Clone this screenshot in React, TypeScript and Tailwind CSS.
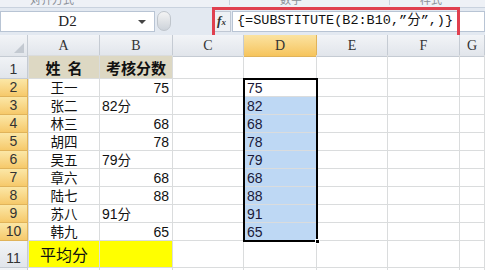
import React from 'react';

const cols = ['A', 'B', 'C', 'D', 'E', 'F', 'G'];

const rows: { name: string; score: string; text?: boolean; d: string }[] = [
  { name: '王一', score: '75', d: '75' },
  { name: '张二', score: '82分', text: true, d: '82' },
  { name: '林三', score: '68', d: '68' },
  { name: '胡四', score: '78', d: '78' },
  { name: '吴五', score: '79分', text: true, d: '79' },
  { name: '章六', score: '68', d: '68' },
  { name: '陆七', score: '88', d: '88' },
  { name: '苏八', score: '91分', text: true, d: '91' },
  { name: '韩九', score: '65', d: '65' },
];

const cjk = { fontFamily: '"Noto Sans CJK SC", "Liberation Sans", sans-serif' };
const num = { fontFamily: '"Liberation Sans", "Noto Sans CJK SC", sans-serif' };

function RowHeader({ n, active, h }: { n: number | string; active?: boolean; h: string }) {
  return (
    <div
      className={`${h} flex items-end justify-center pb-[2px] border-b border-r text-[14px] leading-none ${
        active
          ? 'bg-gradient-to-b from-[#fbe7a6] to-[#f6c96a] border-[#e0b35a] text-[#333]'
          : 'bg-gradient-to-b from-[#f2f4f7] to-[#e1e5eb] border-[#c5cbd3] text-[#333]'
      }`}
      style={num}
    >
      {n}
    </div>
  );
}

function Cell({ className = '', children }: { className?: string; children?: React.ReactNode }) {
  return (
    <div className={`flex items-center border-r border-b border-[#dadcdd] overflow-hidden whitespace-nowrap leading-none ${className}`}>
      {children}
    </div>
  );
}

export default function App() {
  const trackCols = 'grid-cols-[28px_72px_73px_71px_73px_71px_72px_1fr]';

  return (
    <div className="relative w-[485px] h-[270px] overflow-hidden bg-white select-none">
      {/* ribbon remnant */}
      <div className="h-[8px] bg-[#eef1f6] border-b border-[#c9d2de] overflow-hidden">
        <div className="flex text-[11px] text-[#8a8f96] leading-[11px] -mt-[6px]" style={cjk}>
          <span className="w-[230px] pl-[30px] border-r border-[#c9d2de]">对齐方式</span>
          <span className="w-[160px] pl-[50px] border-r border-[#c9d2de]">数字</span>
          <span className="pl-[30px]">样式</span>
        </div>
      </div>

      {/* formula bar */}
      <div className="h-[25px] bg-[#e3e9f1] flex items-center pt-[1px]">
        <div className="w-[155px] h-[21px] bg-white border border-[#b8c4d4] flex items-center relative">
          <span className="flex-1 text-center text-[15px] text-[#222] pr-[20px]" style={{ fontFamily: '"Liberation Serif", serif' }}>
            D2
          </span>
          <span className="absolute right-[8px] top-[8px] w-0 h-0 border-l-[4px] border-r-[4px] border-t-[4px] border-l-transparent border-r-transparent border-t-[#444]" />
        </div>
        <div className="w-[14px] h-[20px] ml-[2px] rounded-full bg-gradient-to-b from-[#f4f4f4] to-[#cdd3da] border border-[#bfc5cc]" />
        <div className="flex-1" />
        <div className="w-[19px] h-[21px] flex items-center justify-center text-[13px] italic font-bold text-[#333] border border-[#c0c8d4] bg-[#eef1f5]" style={{ fontFamily: '"Liberation Serif", serif' }}>
          f<span className="text-[9px] -mb-[3px]">x</span>
        </div>
        <div className="w-[253px] h-[21px] bg-white border border-[#b8c4d4] ml-[1px] flex items-center pl-[4px] text-[13.5px] text-[#111]" style={{ fontFamily: '"Liberation Mono", "Noto Sans CJK SC", monospace' }}>
          {'{=SUBSTITUTE(B2:B10,\u201d分\u201d,)}'}
        </div>
      </div>

      {/* red highlight around formula */}
      <div className="absolute left-[212px] top-[7px] w-[248px] h-[38px] border-[3px] border-[#e0404f] pointer-events-none" />

      <div className="h-[2px] bg-[#e3e9f1]" />

      {/* sheet */}
      <div className="relative">
        <div className={`grid ${trackCols} h-[20px]`}>
          <div className="border-r border-b border-[#c5cbd3] bg-gradient-to-b from-[#f2f4f7] to-[#e1e5eb] relative">
            <svg className="absolute right-[3px] bottom-[3px]" width="10" height="10" viewBox="0 0 10 10">
              <path d="M10 0 L10 10 L0 10 Z" fill="#c3c9d1" />
            </svg>
          </div>
          {cols.map((c) => (
            <div
              key={c}
              className={`flex items-center justify-center border-r border-b text-[14px] ${
                c === 'D'
                  ? 'bg-gradient-to-b from-[#fbe3a0] to-[#f6c45c] border-[#e0b35a]'
                  : 'bg-gradient-to-b from-[#f2f4f7] to-[#e1e5eb] border-[#c5cbd3]'
              } text-[#333]`}
              style={{ fontFamily: '"Liberation Serif", serif' }}
            >
              {c}
            </div>
          ))}
        </div>

        {/* row 1 */}
        <div className={`grid ${trackCols} h-[24px]`}>
          <RowHeader n={1} h="h-[24px]" />
          <Cell className="justify-center bg-[#ddd8c3] border-[#000] border-t border-l font-bold text-[15px] text-[#111]">
            <span style={cjk}>姓&nbsp;&nbsp;名</span>
          </Cell>
          <Cell className="justify-center bg-[#ddd8c3] border-[#000] border-t font-bold text-[15px] text-[#111]">
            <span style={cjk}>考核分数</span>
          </Cell>
          <Cell />
          <Cell />
          <Cell />
          <Cell />
          <Cell />
        </div>

        {rows.map((r, i) => (
          <div key={i} className={`grid ${trackCols} h-[18px]`}>
            <RowHeader n={i + 2} active h="h-[18px]" />
            <Cell className="justify-center border-[#000] border-l text-[13.5px] text-[#111]">
              <span style={cjk}>{r.name}</span>
            </Cell>
            <Cell
              className={`border-[#000] text-[14px] text-[#111] ${
                r.text ? 'justify-start pl-[2px]' : 'justify-end pr-[3px]'
              }`}
            >
              <span style={num}>{r.score.replace('分', '')}</span>
              {r.text && <span className="text-[13.5px]" style={cjk}>分</span>}
            </Cell>
            <Cell />
            <Cell className={`${i === 0 ? 'bg-white' : 'bg-[#bed8f4]'} text-[14px] pl-[3px] text-[#1a1a3a]`}>
              <span style={num}>{r.d}</span>
            </Cell>
            <Cell />
            <Cell />
            <Cell />
          </div>
        ))}

        {/* row 11 */}
        <div className={`grid ${trackCols} h-[27px]`}>
          <RowHeader n={11} h="h-[27px]" />
          <Cell className="justify-center bg-[#ffff00] border-[#000] border-l text-[16px] text-[#111]">
            <span style={cjk}>平均分</span>
          </Cell>
          <Cell className="bg-[#ffff00] border-[#000]" />
          <Cell />
          <Cell />
          <Cell />
          <Cell />
          <Cell />
        </div>
        <div className={`grid ${trackCols} h-[20px]`}>
          <RowHeader n={12} h="h-[20px]" />
          <Cell />
          <Cell />
          <Cell />
          <Cell />
          <Cell />
          <Cell />
          <Cell />
        </div>

        {/* selection D2:D10 */}
        <div className="absolute left-[243px] top-[43px] w-[75px] h-[164px] border-[2px] border-black pointer-events-none">
          <span className="absolute -right-[4px] -bottom-[4px] w-[5px] h-[5px] bg-black border border-white" />
        </div>
      </div>
    </div>
  );
}
